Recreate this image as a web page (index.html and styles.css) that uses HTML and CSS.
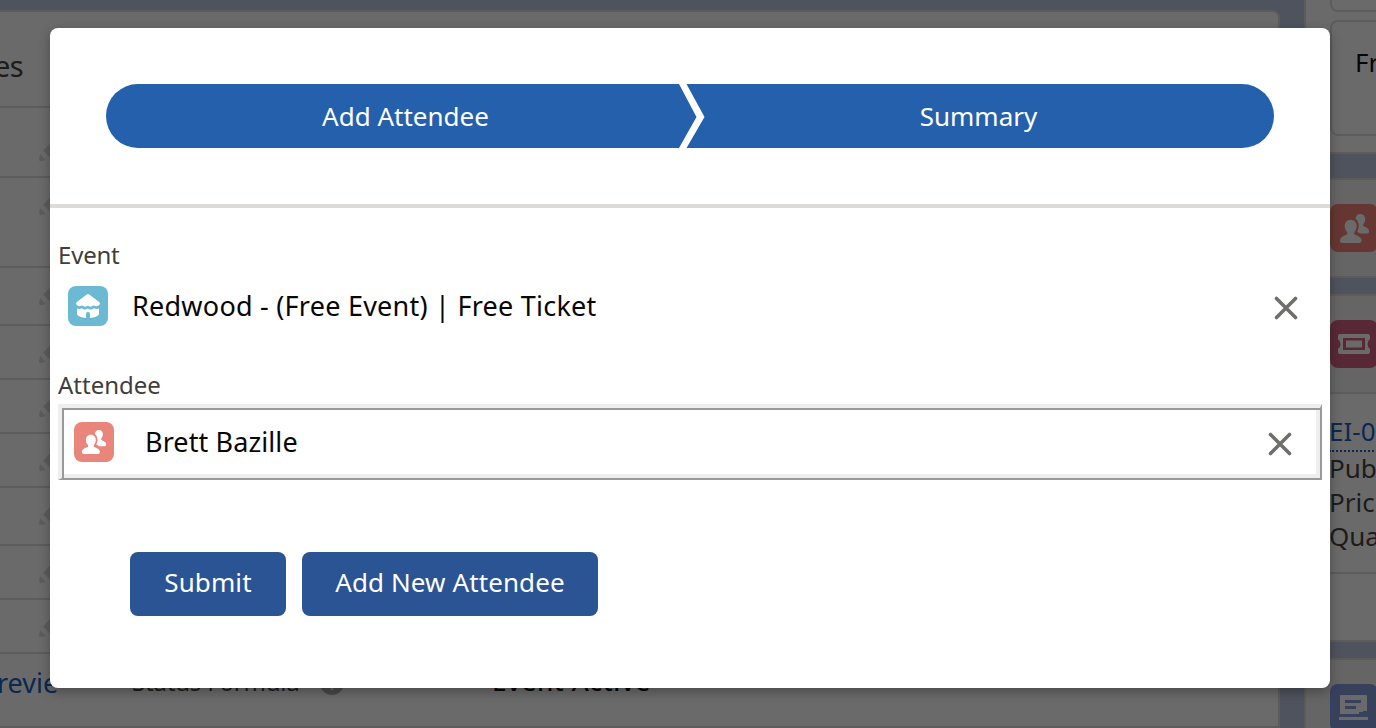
FILE: index.html
```
<!DOCTYPE html>
<html lang="en">
<head>
    <meta charset="UTF-8">
    <meta name="viewport" content="width=device-width, initial-scale=1.0">
    <title>Add Attendee</title>
    <link rel="stylesheet" href="styles.css">
</head>
<body>
    <!-- shared icons -->
    <svg class="sprite">
        <symbol id="pencil" viewBox="0 0 24 24">
            <path d="M1 17 L7 23 L1.5 24 Q0 24 0 22.5Z M4 13.5 L14 3.5 L20.500 10 L10.500 20Z M15.500 2 L17 .8 Q18.500 0 20 1 L23 4 Q24 5.500 23 7 L22 8.500Z"/>
        </symbol>
        <symbol id="people" viewBox="0 0 24 24">
            <path d="M8.800 4.700C11.800 4.700 13.800 7 13.800 10C13.800 12.300 12.800 14 11.800 15V16.700C13.800 17.800 17.800 18.800 17.800 21.500V22.300Q17.800 24 16 24H1.800Q0 24 0 22.300V21.500C0 18.800 4 17.800 6 16.700V15C4.800 14 3.900 12.300 3.900 10C3.900 7 5.800 4.700 8.800 4.700Z"/>
            <path d="M16.800 0C19.300 0 20.900 1.900 20.900 4.300C20.900 6.200 20 7.500 19.200 8.400V9.900C20.900 10.800 24 11.700 24 14V14.700Q24 16.200 22.500 16.200H17.300C16.300 15.600 15 15 14.200 14.600C15 13.300 15.500 11.900 15.500 10C15.500 7.200 14.500 5.200 12.800 4C13 1.700 14.600 0 16.800 0Z"/>
        </symbol>
        <symbol id="close" viewBox="0 0 24 24">
            <path d="M2.500 2.500 L21.500 21.500 M21.500 2.500 L2.500 21.500" fill="none" stroke="currentColor" stroke-width="3.600" stroke-linecap="round"/>
        </symbol>
    </svg>

    <div class="page">
        <main class="record">
            <h2 class="record-title">es</h2>
            <div class="row first"><svg class="pencil"><use href="#pencil"/></svg></div>
            <div class="row tall"><svg class="pencil"><use href="#pencil"/></svg></div>
            <div class="row wide"><svg class="pencil"><use href="#pencil"/></svg></div>
            <div class="row"><svg class="pencil"><use href="#pencil"/></svg></div>
            <div class="row"><svg class="pencil"><use href="#pencil"/></svg></div>
            <div class="row"><svg class="pencil"><use href="#pencil"/></svg></div>
            <div class="row wide"><svg class="pencil"><use href="#pencil"/></svg></div>
            <div class="row"><svg class="pencil"><use href="#pencil"/></svg></div>
            <div class="row"><svg class="pencil"><use href="#pencil"/></svg></div>
            <div class="status">
                <a class="preview">revie</a>
                <span class="status-label">Status Formula</span>
                <span class="info">i</span>
                <span class="status-value">Event Active</span>
            </div>
        </main>

        <aside class="sidebar">
            <section class="card top">
                <div class="box"></div>
                <div class="box ticket">Fr</div>
            </section>
            <section class="card people">
                <div class="tile coral"><svg class="people-icon"><use href="#people"/></svg></div>
            </section>
            <section class="card items">
                <div class="items-head">
                    <div class="tile pink">
                        <svg class="ticket-icon" viewBox="0 0 32 20">
                            <path fill-rule="evenodd" d="M2 0H30Q32 0 32 2V5Q29.500 7 29.500 10T32 15V18Q32 20 30 20H2Q0 20 0 18V15Q2.500 13 2.500 10T0 5V2Q0 0 2 0Z M5 4V16H27V4Z"/>
                            <path d="M8 6.500H24V13.500H8Z"/>
                        </svg>
                    </div>
                </div>
                <div class="item">
                    <a class="item-link">EI-0</a>
                    <p>Pub</p>
                    <p>Price</p>
                    <p>Qua</p>
                </div>
            </section>
            <section class="card notes">
                <div class="tile blue">
                    <svg class="note-icon" viewBox="0 0 30 26">
                        <path fill-rule="evenodd" d="M2 0H27Q28 0 28 1V16H24V17H20V19H1V1Q1 0 2 0Z M6 5V8H22V5Z M6 11V14H17V11Z"/>
                        <path d="M0 22H29V25H0Z"/>
                    </svg>
                </div>
            </section>
        </aside>
    </div>

    <div class="backdrop"></div>

    <div class="modal">
        <header class="modal-header">
            <div class="path">
                <div class="step">Add Attendee</div>
                <div class="step">Summary</div>
                <svg class="chevron" viewBox="0 0 26 64">
                    <path d="M0 0H7.500L25.500 33L7.500 64H0L17.500 33Z"/>
                </svg>
            </div>
        </header>
        <div class="modal-body">
            <label class="event-label">Event</label>
            <div class="lookup">
                <span class="icon event-icon">
                    <svg viewBox="0 0 24 24">
                        <path d="M10.800.4Q12 -.4 13.200.4L23.200 8Q24.400 9.300 23.600 10.500Q21.800 13 19.400 12Q17.800 11 16.500 12Q14.300 13.600 12.300 11.800Q11.800 11.500 11.400 11.800Q9.400 13.600 7.300 12Q6 11 4.500 12Q2 13 .4 10.500Q-.4 9.300.8 8Z"/>
                        <path d="M1 14.500Q3.500 15.600 5.900 14.200Q8.800 16.600 11.800 14.400Q14.800 16.600 17.900 14.200Q20.500 15.600 23 14.500V19.500Q23 21 21.500 22Q19 23.500 14 23.900V19.500Q14 18 12 18T10 19.500V23.900Q5 23.500 2.500 22Q1 21 1 19.500Z"/>
                    </svg>
                </span>
                <span class="lookup-name event-name">Redwood - (Free Event) | Free Ticket</span>
                <svg class="close"><use href="#close"/></svg>
            </div>
            <label class="attendee-label">Attendee</label>
            <div class="lookup boxed">
                <span class="icon attendee-icon"><svg><use href="#people"/></svg></span>
                <span class="lookup-name attendee-name">Brett Bazille</span>
                <svg class="close"><use href="#close"/></svg>
            </div>
            <div class="actions">
                <button class="submit" type="button">Submit</button>
                <button class="add-new" type="button">Add New Attendee</button>
            </div>
        </div>
    </div>
</body>
</html>
```
FILE: styles.css
```
* {
    box-sizing: border-box;
}
body {
    margin: 0;
    height: 728px;
    overflow: hidden;
    font-family: "Noto Sans", sans-serif;
    font-size: 26px;
    color: #3e3e3c;
}
h2, p {
    margin: 0;
    font-weight: normal;
}
.sprite {
    display: none;
}

/* record page behind the modal */
.page {
    display: flex;
    gap: 24px;
    height: 728px;
    background: #b8c6e2;
    overflow: hidden;
}
.record {
    width: 1280px;
    flex: none;
    margin-top: 10px;
    border: 2px solid #dddbda;
    border-left: 0;
    border-radius: 0 8px 0 0;
    background: #fff;
}
.record-title {
    height: 96px;
    padding-top: 34px;
    border-bottom: 2px solid #dddbda;
    font-size: 29px;
    line-height: 40px;
    letter-spacing: -0.5px;
    text-indent: -6px;
}
.row {
    height: 54px;
    padding: 13px 0 0 39px;
    border-bottom: 2px solid #dddbda;
}
.row.first {
    height: 70px;
    padding-top: 29px;
}
.row.tall {
    height: 90px;
}
.row.wide {
    height: 58px;
}
.pencil {
    display: block;
    width: 24px;
    height: 24px;
    fill: #dddbda;
}
.status {
    display: flex;
    align-items: center;
    height: 56px;
}
.preview {
    width: 132px;
    font-size: 27px;
    color: #0b5cbd;
    text-indent: -3px;
}
.status-label {
    width: 188px;
    margin-top: -2px;
    font-size: 24px;
    letter-spacing: -0.2px;
    white-space: nowrap;
}
.info {
    width: 24px;
    height: 24px;
    margin: 2px 148px 0 0;
    border-radius: 50%;
    background: #b0adab;
    color: #fff;
    font-size: 18px;
    font-weight: bold;
    line-height: 24px;
    text-align: center;
}
.status-value {
    margin-top: -2px;
    color: #080707;
    font-weight: 500;
    letter-spacing: 0.6px;
}

.sidebar {
    width: 340px;
    flex: none;
}
.card {
    border: 2px solid #dddbda;
    background: #fff;
    padding-left: 24px;
}
.card.top {
    height: 154px;
    border-top: 0;
}
.box {
    height: 12px;
    border: 2px solid #dddbda;
    border-top: 0;
    border-radius: 0 0 8px 8px;
}
.box.ticket {
    height: 116px;
    margin-top: 8px;
    padding: 22px 0 0 23px;
    border-top: 2px solid #dddbda;
    border-radius: 8px;
    color: #080707;
    line-height: 36px;
}
.card.people {
    height: 100px;
    margin-top: 24px;
    padding-top: 24px;
    background: #f3f2f2;
}
.card.items {
    height: 348px;
    margin-top: 16px;
    padding-left: 0;
}
.items-head {
    height: 98px;
    padding: 24px 0 0 24px;
    border-bottom: 2px solid #dddbda;
    background: #f3f2f2;
}
.tile {
    display: flex;
    align-items: center;
    justify-content: center;
    width: 48px;
    height: 48px;
    border-radius: 8px;
    fill: #fff;
}
.coral {
    background: #f27f74;
}
.pink {
    background: #d15b7f;
}
.blue {
    background: #7d98dc;
}
.people-icon {
    width: 29px;
    height: 29px;
}
.ticket-icon {
    width: 32px;
    height: 20px;
}
.note-icon {
    width: 30px;
    height: 26px;
}
.item {
    height: 180px;
    padding: 22px 0 0 23px;
    border-bottom: 2px solid #dddbda;
    line-height: 34px;
}
.item-link {
    display: block;
    height: 36px;
    border-bottom: 2px dotted #0b5cbd;
    color: #0b5cbd;
    line-height: 31px;
}
.item p:nth-of-type(1) {
    margin-top: -1px;
}
.card.notes {
    height: 120px;
    margin-top: 16px;
    padding-top: 24px;
    background: #f3f2f2;
}
.backdrop {
    position: absolute;
    inset: 0;
    background: rgba(8, 7, 7, 0.6);
}

/* modal */
.modal {
    position: absolute;
    top: 28px;
    left: 50px;
    width: 1280px;
    height: 660px;
    border-radius: 8px;
    background: #fff;
    box-shadow: 0 4px 12px rgba(0, 0, 0, 0.3);
}
.modal-header {
    height: 180px;
    padding: 56px 56px 0;
    border-bottom: 4px solid #dddbda;
}
.path {
    position: relative;
    display: flex;
    height: 64px;
    border-radius: 32px;
    background: #2560ad;
    overflow: hidden;
}
.step {
    flex: 0 0 584px;
    padding-left: 15px;
    color: #fff;
    line-height: 65px;
    text-align: center;
}
.step + .step {
    padding-left: 0;
    padding-right: 7px;
}
.chevron {
    position: absolute;
    top: 0;
    left: 573px;
    width: 26px;
    height: 64px;
    fill: #fff;
}
.modal-body {
    padding: 29px 8px 0;
}
label {
    display: block;
    font-size: 24px;
    line-height: 36px;
}
.event-label {
    letter-spacing: -0.2px;
}
.lookup {
    display: flex;
    align-items: center;
    height: 64px;
    margin-top: 1px;
    padding: 0 24px 0 10px;
    color: #080707;
    font-size: 27px;
}
.icon {
    display: flex;
    align-items: center;
    justify-content: center;
    width: 40px;
    height: 40px;
    border-radius: 8px;
    fill: #fff;
}
.icon svg {
    width: 24px;
    height: 24px;
}
.event-icon {
    background: #6bb9d2;
}
.attendee-icon {
    background: #e8867c;
}
.lookup-name {
    flex: 1;
    padding: 0 0 2px 24px;
}
.event-name {
    letter-spacing: 0.24px;
}
.close {
    width: 24px;
    height: 24px;
    margin-top: 4px;
    color: #706e6b;
}
.attendee-label {
    margin-top: 29px;
}
/* raised frame: light outside, dark inside, reversed on the bottom right */
.boxed {
    height: 76px;
    border-style: solid;
    border-width: 4px 2px 2px 4px;
    border-color: #eee #999 #999 #eee;
    box-shadow: inset 2px 2px #999, inset -4px -4px #eee;
    padding: 0 28px 2px 12px;
}
.boxed .lookup-name {
    padding-left: 31px;
    letter-spacing: 0.1px;
}
.actions {
    display: flex;
    gap: 16px;
    padding: 72px 0 0 72px;
}
button {
    height: 64px;
    padding: 0 0 4px;
    border: 0;
    border-radius: 8px;
    background: #2a5494;
    color: #fff;
    font: inherit;
    letter-spacing: 0.1px;
}
.submit {
    width: 156px;
}
.add-new {
    width: 296px;
}
```
